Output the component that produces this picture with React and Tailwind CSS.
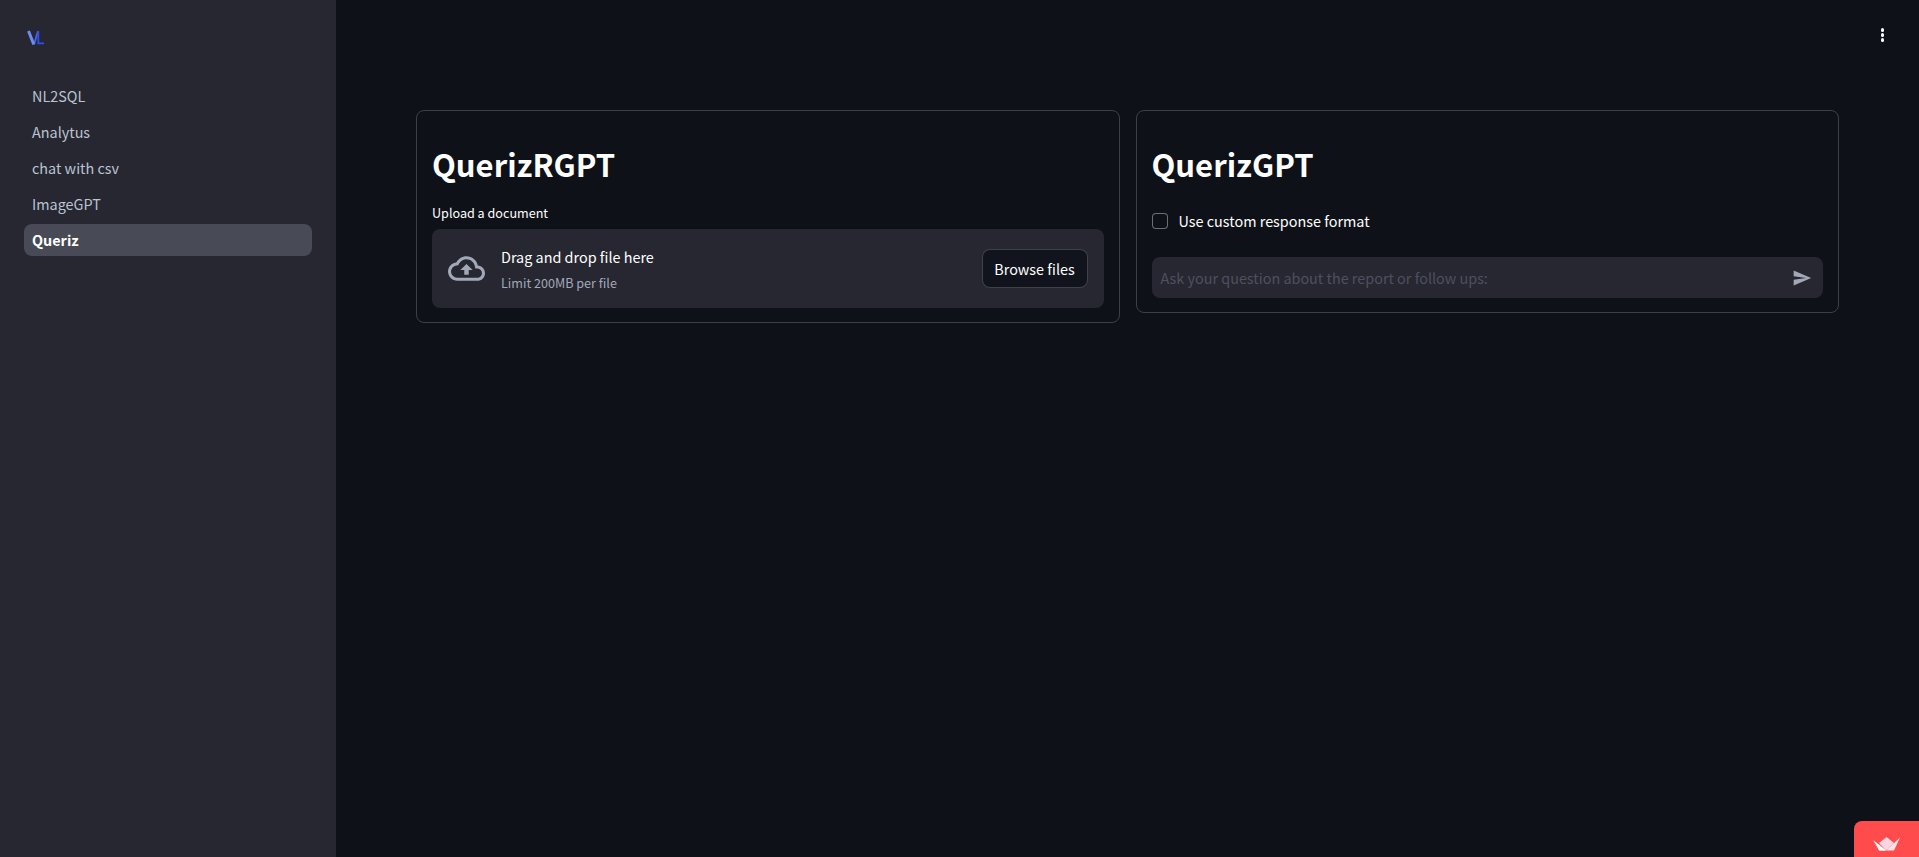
const FONT = "font-['Noto_Sans_CJK_SC','Liberation_Sans',sans-serif]";

const pages = ["NL2SQL", "Analytus", "chat with csv", "ImageGPT", "Queriz"];

function Logo() {
  return (
    <svg width="18" height="16" viewBox="0 0 18 16" fill="none">
      <path d="M1.5 1 L6.8 14.5" stroke="#6d8cf5" strokeWidth="3" />
      <path d="M7 14.5 L11 1" stroke="#4a63f0" strokeWidth="1.8" />
      <path d="M11.3 1 L11.3 13.4 L17 13.4" stroke="#2f4ff0" strokeWidth="1.8" />
      <path d="M6.5 12 L7.5 14" stroke="#4fc3b0" strokeWidth="1" />
    </svg>
  );
}

function Sidebar() {
  return (
    <aside className="w-[336px] shrink-0 bg-[#262730] px-6 pt-[30px]">
      <div className="h-[34px] pl-[3px]">
        <Logo />
      </div>
      <nav className="mt-4 flex flex-col gap-1">
        {pages.map((name) => (
          <div
            key={name}
            className={
              name === "Queriz"
                ? "h-8 rounded-lg bg-[#484a55] px-2 text-[14.4px] leading-8 font-semibold text-white"
                : "h-8 rounded-lg px-2 text-[14.4px] leading-8 text-[#bac3d2]"
            }
          >
            {name}
          </div>
        ))}
      </nav>
    </aside>
  );
}

function UploadCard() {
  return (
    <section className="rounded-lg border border-[#fafafa33] px-[15px] pt-4 pb-[14px]">
      <h1 className="h-[76px] text-[31px] leading-[74px] font-semibold text-white">QuerizRGPT</h1>
      <p className="h-5 text-[12.6px] leading-5 text-white">Upload a document</p>
      <div className="mt-1.5 flex h-[79px] items-center rounded-lg bg-[#262730] px-4">
        <svg width="37" height="37" viewBox="0 0 24 24" fill="#a3a8b8">
          <path d="M19.35 10.04C18.67 6.59 15.64 4 12 4 9.11 4 6.6 5.64 5.35 8.04 2.34 8.36 0 10.91 0 14c0 3.31 2.69 6 6 6h13c2.76 0 5-2.24 5-5 0-2.64-2.05-4.78-4.65-4.96zM19 18H6c-2.21 0-4-1.79-4-4 0-2.05 1.53-3.76 3.56-3.97l1.07-.11.5-.95C8.08 7.14 9.94 6 12 6c2.62 0 4.88 1.86 5.39 4.43l.3 1.5 1.53.11c1.56.1 2.78 1.41 2.78 2.96 0 1.65-1.35 3-3 3zM8 13h2.55v3h2.9v-3H16l-4-4z" />
        </svg>
        <div className="ml-[16px] flex-1">
          <p className="text-[14.4px] leading-6 text-white">Drag and drop file here</p>
          <p className="mt-1 text-[12.6px] leading-5 text-[#a3a8b8]">Limit 200MB per file</p>
        </div>
        <button className="h-[39px] w-[106px] rounded-lg border border-[#fafafa33] bg-[#11141c] text-[14.4px] leading-6 text-white">
          Browse files
        </button>
      </div>
    </section>
  );
}

function ChatCard() {
  return (
    <section className="rounded-lg border border-[#fafafa33] px-[15px] pt-4 pb-[14px]">
      <h1 className="h-[76px] text-[31px] leading-[74px] font-semibold text-white">QuerizGPT</h1>
      <label className="mt-1.5 flex h-6 items-center">
        <span className="h-4 w-4 rounded border border-[#fafafa66] bg-[#0e1117]" />
        <span className="ml-[11px] text-[14.4px] leading-6 text-white">Use custom response format</span>
      </label>
      <div className="mt-6 flex h-[41px] items-center rounded-lg bg-[#262730] pr-[11px] pl-[9px]">
        <span className="flex-1 text-[14.4px] leading-[23px] text-[#4e505f]">
          Ask your question about the report or follow ups:
        </span>
        <svg width="20" height="20" viewBox="0 0 24 24" fill="#a3a8b8">
          <path d="M2.01 21L23 12 2.01 3 2 10l15 2-15 2z" />
        </svg>
      </div>
    </section>
  );
}

export default function App() {
  return (
    <div className={`relative flex h-screen overflow-hidden bg-[#0e1117] ${FONT}`}>
      <Sidebar />
      <main className="min-w-0 flex-1 px-20 pt-[110px]">
        <div className="grid grid-cols-2 items-start gap-4">
          <UploadCard />
          <ChatCard />
        </div>
      </main>

      {/* kebab menu */}
      <div className="absolute top-[28px] right-[35px] flex flex-col gap-[1.5px]">
        <span className="h-[3.5px] w-[3.5px] rounded-full bg-white" />
        <span className="h-[3.5px] w-[3.5px] rounded-full bg-white" />
        <span className="h-[3.5px] w-[3.5px] rounded-full bg-white" />
      </div>

      {/* hosted-by badge */}
      <div className="absolute right-0 bottom-0 flex h-9 w-[65px] justify-center rounded-tl-lg bg-[#ff4b4b] pt-4">
        <svg width="27" height="14" viewBox="0 0 27 14">
          <polygon points="0,3 13,13.5 7,13.5" fill="#fff" />
          <polygon points="27,0.5 21,13.5 13,13.5" fill="#fde3e8" />
          <polygon points="13.5,0 6,6 13,13.5 21,6" fill="#fbd5df" />
          <polygon points="1,4 13,13.5 6,13.5" fill="#ffffff" />
        </svg>
      </div>
    </div>
  );
}
